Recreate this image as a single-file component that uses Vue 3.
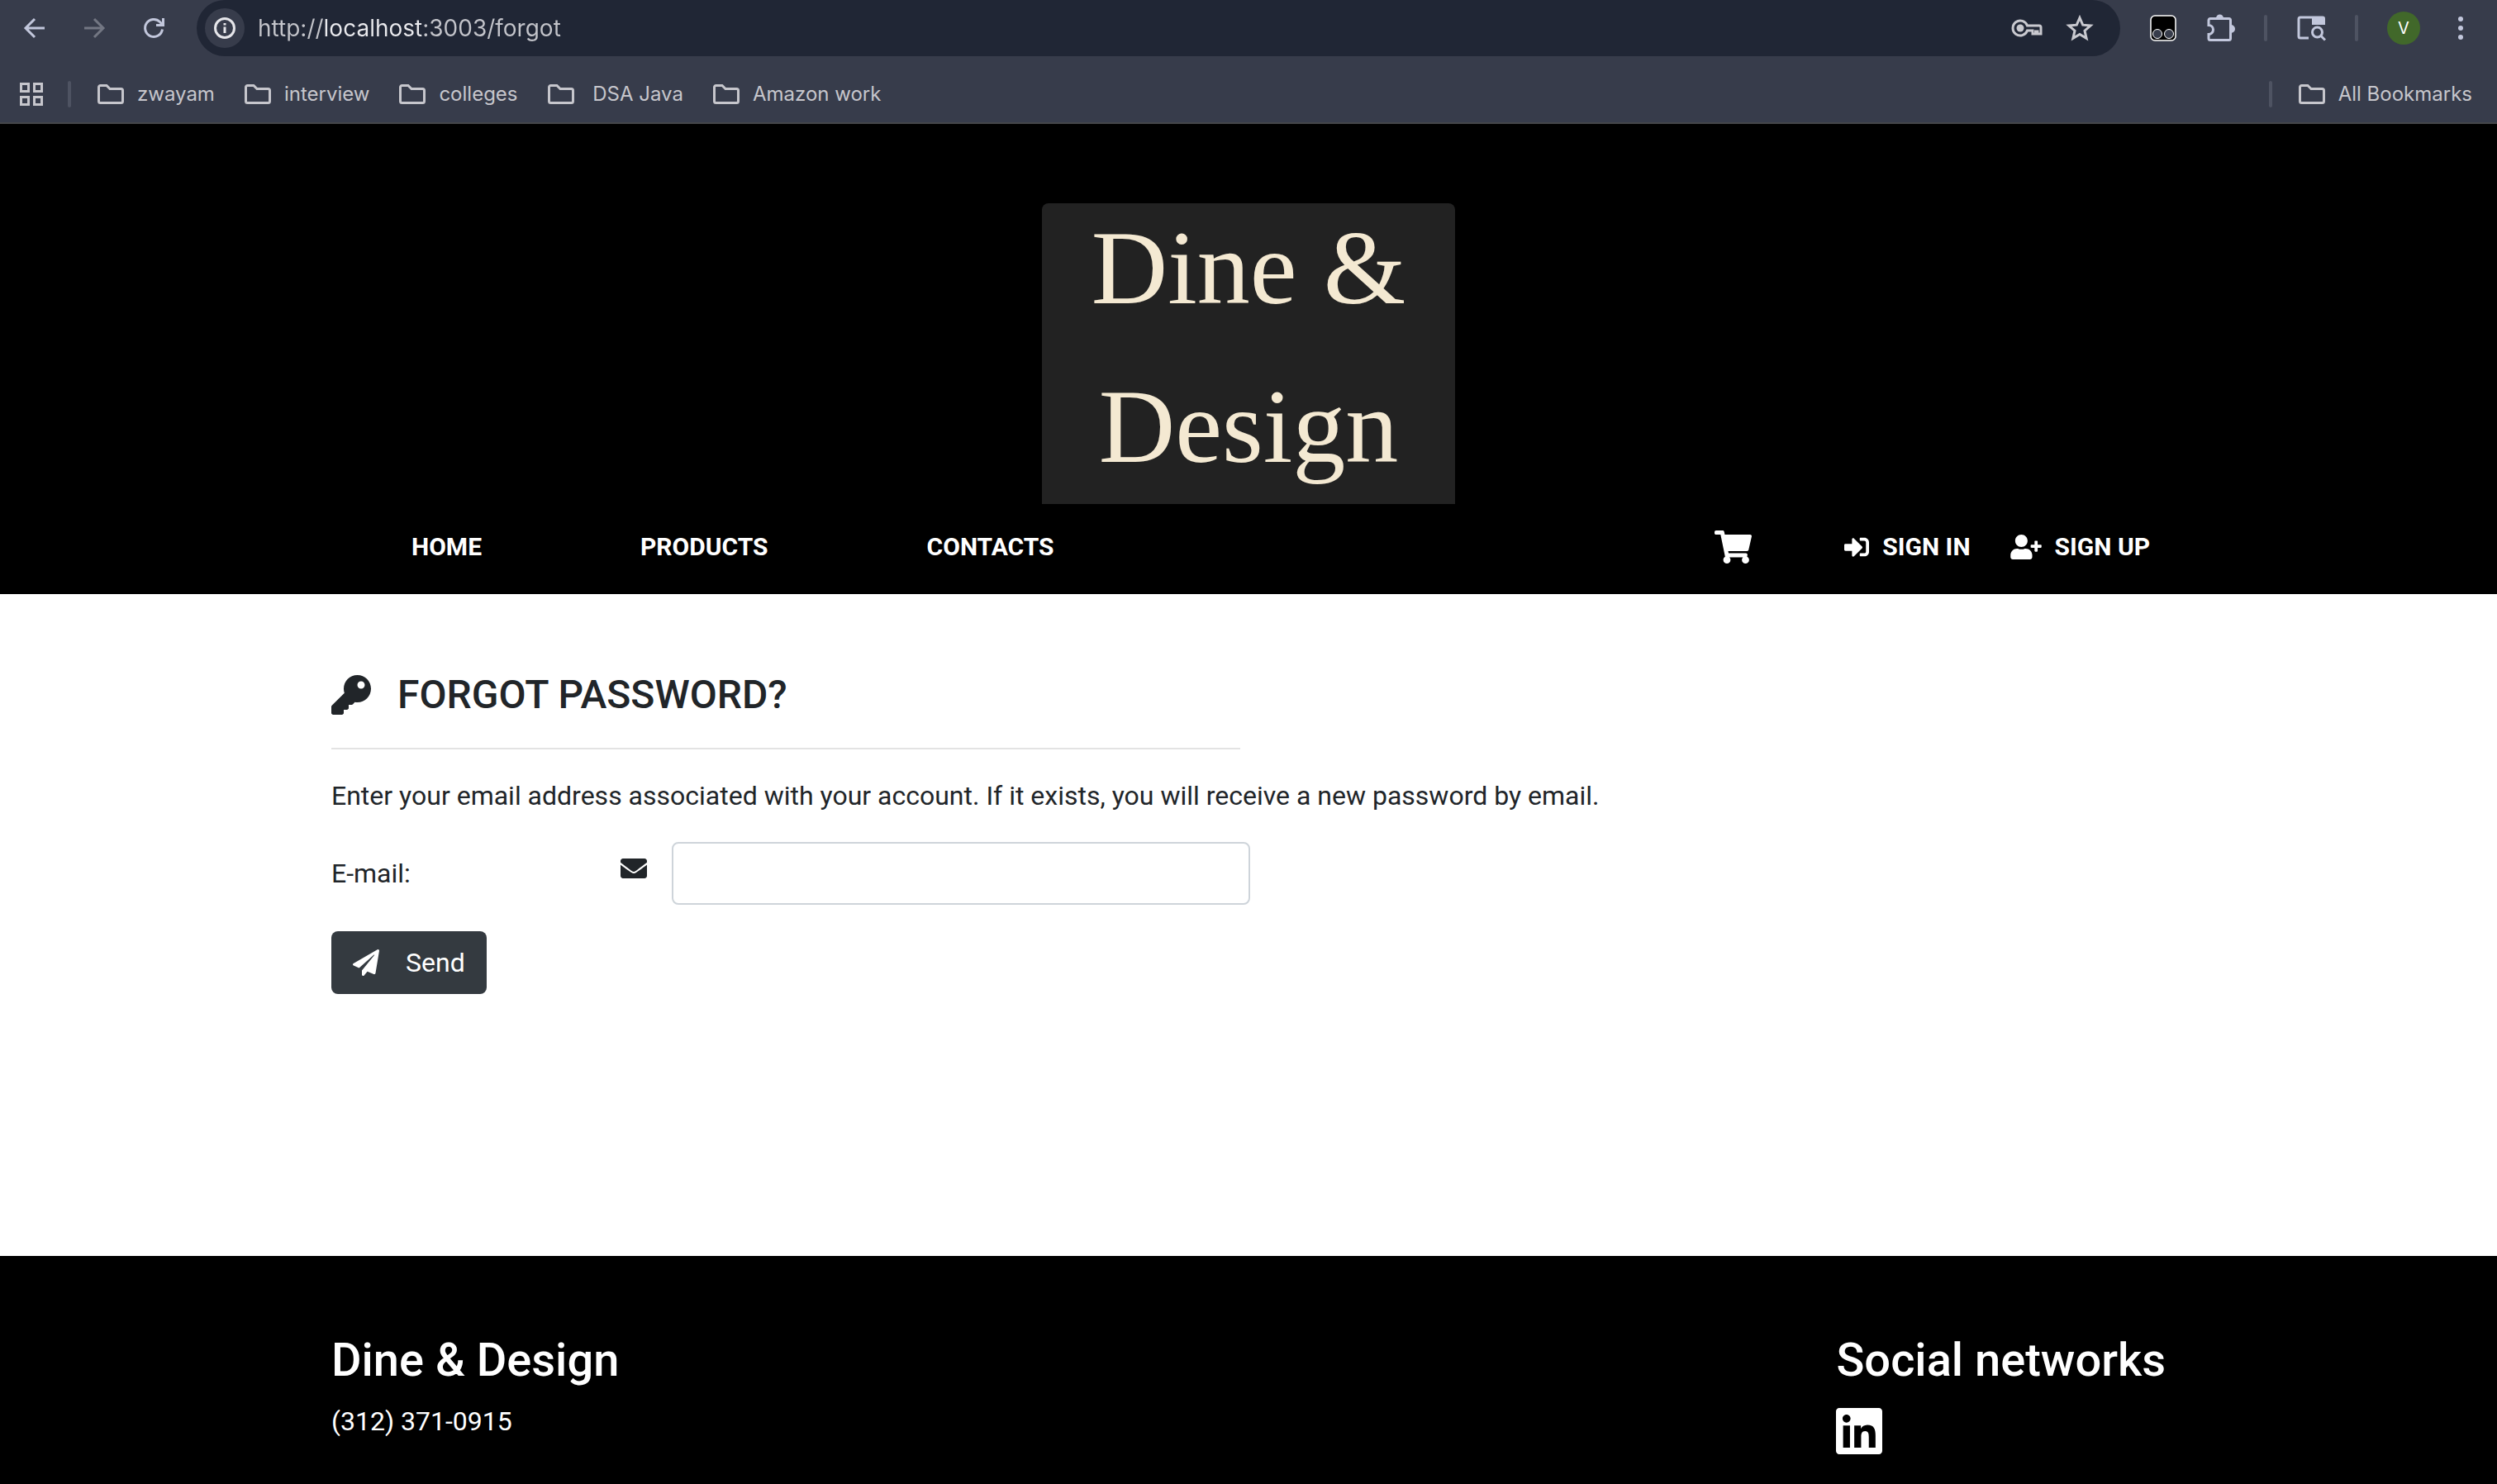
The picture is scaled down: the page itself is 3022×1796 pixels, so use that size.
<script setup>
import { ref } from 'vue'

const address = ref('http://localhost:3003/forgot')
const email = ref('')
const folders = ['zwayam', 'interview', 'colleges', '\u00a0DSA Java', 'Amazon work']
const links = ['HOME', 'PRODUCTS', 'CONTACTS']
</script>

<template>
  <div class="window">
    <div class="browser">
      <div class="toolbar">
        <button class="tool" aria-label="Back">
          <svg width="28" height="28" viewBox="0 0 28 28"><path d="M26 14H3.500M14 3L3 14l11 11" /></svg>
        </button>
        <button class="tool dim" aria-label="Forward">
          <svg width="28" height="28" viewBox="0 0 28 28"><path d="M2 14h22.500M14 3l11 11-11 11" /></svg>
        </button>
        <button class="tool" aria-label="Reload">
          <svg width="28" height="28" viewBox="0 0 28 28"><path d="M24.500 15.500A10.500 10.500 0 1 1 21.500 6.500L25 10M25.500 2v8.500H17" /></svg>
        </button>
        <div class="omnibox">
          <button class="site-info" aria-label="View site information">
            <svg width="28" height="28" viewBox="0 0 28 28"><circle cx="14" cy="14" r="11.500" /><path d="M14 12.500V20M14 8v2.500" /></svg>
          </button>
          <input v-model="address" class="address" type="text" aria-label="Address" spellcheck="false" />
          <button class="in-box" aria-label="Passwords">
            <svg width="38" height="24" viewBox="0 0 38 24"><path d="M19.500 9A9 9 0 1 0 19.500 15H26v4h3.500v-3H32v3h4V11a2 2 0 0 0-2-2z" /><circle class="solid" cx="11" cy="12" r="4.500" /></svg>
          </button>
          <button class="in-box" aria-label="Bookmark this page">
            <svg width="34" height="34" viewBox="0 0 34 34"><path d="M17 4.500l3.700 8.700 9.400.8-7.100 6.200 2.100 9.200-8.100-4.900-8.100 4.900 2.100-9.200-7.100-6.200 9.400-.8z" /></svg>
          </button>
        </div>
        <div class="extensions">
          <button class="ext" aria-label="Extension">
            <svg width="32" height="32" viewBox="0 0 32 32"><rect x="1" y="1" width="30" height="30" rx="5" fill="#000" stroke="#fff" stroke-width="1.500" /><circle cx="9" cy="23" r="5.500" fill="#373c4b" stroke="#fff" stroke-width="1" /><circle cx="23" cy="23" r="5.500" fill="#373c4b" stroke="#fff" stroke-width="1" /></svg>
          </button>
          <button class="ext" aria-label="Extensions">
            <svg width="36" height="36" viewBox="0 0 36 36"><path d="M6 6.500H28.500a2 2 0 0 1 2 2V30.500a2 2 0 0 1-2 2H6a2 2 0 0 1-2-2V25.500a5.500 5.500 0 0 0 0-11V8.500a2 2 0 0 1 2-2z" /><path class="solid" d="M13 6a4.500 4.500 0 0 1 9 0zM31 14a5 5 0 0 1 0 10z" /></svg>
          </button>
          <span class="rule"></span>
          <button class="ext" aria-label="Search tabs">
            <svg width="36" height="34" viewBox="0 0 36 34"><path d="M15 29H5a2 2 0 0 1-2-2V6a2 2 0 0 1 2-2h14" /><circle cx="25.500" cy="22" r="6" /><path d="M30 26.500l5 5" /><path class="solid" d="M19 2.500H32a3 3 0 0 1 3 3V13H19z" /></svg>
          </button>
          <span class="rule"></span>
          <button class="avatar" aria-label="Profile">V</button>
          <button class="ext" aria-label="Menu">
            <svg width="8" height="32" viewBox="0 0 8 32"><g class="solid"><circle cx="4" cy="5" r="3" /><circle cx="4" cy="16" r="3" /><circle cx="4" cy="27" r="3" /></g></svg>
          </button>
        </div>
      </div>
      <div class="bookmarks">
        <button class="tool" aria-label="Apps">
          <svg width="28" height="28" viewBox="0 0 28 28"><path d="M1.500 1.500h9v9h-9zM17.500 1.500h9v9h-9zM1.500 17.500h9v9h-9zM17.500 17.500h9v9h-9z" /></svg>
        </button>
        <span class="rule"></span>
        <div class="folders">
          <button v-for="name in folders" :key="name" class="folder">
            <svg width="32" height="24" viewBox="0 0 32 24"><path d="M3.500 1.500H11L15 5.500H28.500a2 2 0 0 1 2 2V20.500a2 2 0 0 1-2 2H3.500a2 2 0 0 1-2-2V3.500a2 2 0 0 1 2-2z" /></svg>{{ name }}
          </button>
        </div>
        <span class="rule"></span>
        <button class="folder">
          <svg width="32" height="24" viewBox="0 0 32 24"><path d="M3.500 1.500H11L15 5.500H28.500a2 2 0 0 1 2 2V20.500a2 2 0 0 1-2 2H3.500a2 2 0 0 1-2-2V3.500a2 2 0 0 1 2-2z" /></svg>All Bookmarks
        </button>
      </div>
    </div>

    <header class="masthead">
      <a class="logo" href="#home"><span>Dine &amp;</span><span>Design</span></a>
      <nav class="container nav">
        <div class="links">
          <a v-for="link in links" :key="link" :href="'#' + link.toLowerCase()">{{ link }}</a>
        </div>
        <div class="account">
          <a class="cart" href="#cart" aria-label="Cart">
            <svg width="45" height="40" viewBox="0 0 576 512"><path d="M528.12 301.319l47.273-208C578.806 78.301 567.391 64 551.99 64H159.208l-9.166-44.81C147.758 8.021 137.93 0 126.529 0H24C10.745 0 0 10.745 0 24v16c0 13.255 10.745 24 24 24h69.883l70.248 343.435C147.325 417.1 136 435.222 136 456c0 30.928 25.072 56 56 56s56-25.072 56-56c0-15.674-6.447-29.835-16.824-40h209.647C430.447 426.165 424 440.326 424 456c0 30.928 25.072 56 56 56s56-25.072 56-56c0-22.172-12.888-41.332-31.579-50.405l5.517-24.276c3.413-15.018-8.002-29.319-23.403-29.319H218.117l-6.545-32h293.145c11.206 0 20.92-7.754 23.403-18.681z" /></svg>
          </a>
          <a href="#sign-in">
            <svg width="30" height="30" viewBox="0 0 512 512"><path d="M416 448h-84c-6.6 0-12-5.400-12-12v-40c0-6.600 5.400-12 12-12h84c17.700 0 32-14.300 32-32V160c0-17.700-14.300-32-32-32h-84c-6.600 0-12-5.400-12-12V76c0-6.600 5.400-12 12-12h84c53 0 96 43 96 96v192c0 53-43 96-96 96zm-47-201L201 79c-15-15-41-4.500-41 17v96H24c-13.300 0-24 10.700-24 24v96c0 13.300 10.700 24 24 24h136v96c0 21.500 26 32 41 17l168-168c9.300-9.400 9.300-24.600 0-34z" /></svg>SIGN IN
          </a>
          <a href="#sign-up">
            <svg width="38" height="30" viewBox="0 0 640 512"><path d="M624 208h-64v-64c0-8.800-7.200-16-16-16h-32c-8.800 0-16 7.200-16 16v64h-64c-8.800 0-16 7.200-16 16v32c0 8.800 7.200 16 16 16h64v64c0 8.800 7.200 16 16 16h32c8.800 0 16-7.200 16-16v-64h64c8.800 0 16-7.200 16-16v-32c0-8.800-7.200-16-16-16zm-400 48c70.700 0 128-57.300 128-128S294.700 0 224 0 96 57.300 96 128s57.300 128 128 128zm89.600 32h-16.700c-22.200 10.200-46.900 16-72.900 16s-50.600-5.800-72.900-16h-16.700C60.200 288 0 348.200 0 422.400V464c0 26.500 21.500 48 48 48h352c26.500 0 48-21.500 48-48v-41.600c0-74.200-60.200-134.400-134.400-134.400z" /></svg>SIGN UP
          </a>
        </div>
      </nav>
    </header>

    <main class="content">
      <div class="container">
        <h4>
          <svg width="48" height="48" viewBox="0 0 512 512"><path d="M512 176.001C512 273.203 433.202 352 336 352c-11.220 0-22.190-1.062-32.827-3.069l-24.012 27.014A23.999 23.999 0 0 1 261.223 384H224v40c0 13.255-10.745 24-24 24h-40v40c0 13.255-10.745 24-24 24H24c-13.255 0-24-10.745-24-24v-78.059c0-6.365 2.529-12.470 7.029-16.971l161.802-161.802C163.108 213.814 160 195.271 160 176 160 78.798 238.797.001 335.999 0 433.488-.001 512 78.511 512 176.001zM336 128c0 26.510 21.490 48 48 48s48-21.490 48-48-21.490-48-48-48-48 21.490-48 48z" /></svg>FORGOT PASSWORD?
        </h4>
        <hr />
        <p>Enter your email address associated with your account. If it exists, you will receive a new password by email.</p>
        <form @submit.prevent>
          <div class="field">
            <label for="email">E-mail:</label>
            <svg width="32" height="32" viewBox="0 0 512 512"><path d="M502.300 190.800c3.900-3.100 9.700-.2 9.700 4.700V400c0 26.500-21.500 48-48 48H48c-26.500 0-48-21.500-48-48V195.600c0-5 5.700-7.800 9.700-4.700 22.400 17.400 52.100 39.500 154.100 113.600 21.100 15.400 56.700 47.800 92.200 47.600 35.700.3 72-32.800 92.300-47.600 102-74.100 131.600-96.300 154-113.700zM256 320c23.200.4 56.600-29.200 73.400-41.400 132.700-96.300 142.800-104.700 173.400-128.700 5.800-4.500 9.200-11.500 9.200-18.900v-19c0-26.500-21.500-48-48-48H48c-26.500 0-48 21.500-48 48v19c0 7.400 3.400 14.300 9.200 18.900 30.600 23.900 40.700 32.400 173.400 128.700 16.800 12.200 50.200 41.800 73.400 41.400z" /></svg>
            <input id="email" v-model="email" type="email" />
          </div>
          <button class="send" type="submit">
            <svg width="32" height="32" viewBox="0 0 512 512"><path d="M476 3.200L12.500 270.600c-18.100 10.400-15.800 35.600 2.200 43.200L121 358.400l287.300-253.200c5.500-4.900 13.300 2.600 8.600 8.300L176 407v80.500c0 23.600 28.500 32.900 42.500 15.800L282 426l124.600 52.200c14.200 6 30.400-2.900 33-18.200l72-432C515 7.800 493.300-6.800 476 3.200z" /></svg>Send
          </button>
        </form>
      </div>
    </main>

    <footer class="footer">
      <div class="container columns">
        <div>
          <h3>Dine &amp; Design</h3>
          <p>(312) 371-0915</p>
        </div>
        <div>
          <h3>Social networks</h3>
          <a class="social" href="#linkedin" aria-label="LinkedIn">
            <svg width="56" height="56" viewBox="0 32 448 448"><path d="M416 32H31.900C14.300 32 0 46.500 0 64.300v383.400C0 465.500 14.300 480 31.900 480H416c17.600 0 32-14.500 32-32.300V64.300c0-17.800-14.400-32.300-32-32.300zM135.400 416H69V202.200h66.500V416zm-33.200-243c-21.300 0-38.500-17.300-38.500-38.500S80.900 96 102.200 96c21.200 0 38.500 17.300 38.500 38.500 0 21.300-17.200 38.500-38.500 38.500zm282.100 243h-66.400V312c0-24.800-.5-56.700-34.500-56.700-34.600 0-39.900 27-39.900 54.900V416h-66.400V202.200h63.700v29.200h.9c8.900-16.800 30.600-34.500 62.200-34.500 66.500 0 78.800 43.800 78.800 100.900V416z" /></svg>
          </a>
        </div>
      </div>
    </footer>
  </div>
</template>

<style>
body {
  margin: 0;
}
</style>

<style scoped>
.window {
  display: flex;
  flex-direction: column;
  min-height: 100vh;
  overflow: hidden;
  background: #fff;
  color: #212529;
  font: 400 32px/48px Roboto, sans-serif;
}
svg {
  display: block;
  flex: none;
  fill: currentColor;
}
button {
  padding: 0;
  border: 0;
  background: none;
  color: inherit;
  font: inherit;
}
a {
  color: inherit;
  text-decoration: none;
}
h3,
h4,
p {
  margin: 0;
  font-weight: 400;
}

/* Browser frame */
.browser {
  border-bottom: 2px solid #444649;
  background: #373c4b;
  color: #c6c6cc;
  font: 400 24px/32px Inter, sans-serif;
}
.browser svg {
  fill: none;
  stroke: currentColor;
  stroke-width: 3;
}
.browser svg .solid {
  fill: currentColor;
  stroke: none;
}
.toolbar {
  display: flex;
  align-items: center;
  height: 68px;
  padding-left: 28px;
  color: #c2c7dc;
}
.toolbar > .tool {
  margin-right: 44px;
}
.toolbar > .tool:nth-child(3) {
  margin-right: 38px;
}
.toolbar > .dim {
  color: #737783;
}
.omnibox {
  display: flex;
  flex: 1;
  align-items: center;
  height: 68px;
  box-sizing: border-box;
  padding: 0 32px 0 10px;
  border-radius: 34px;
  background: #202635;
  color: #c9c9cf;
}
.site-info {
  display: grid;
  place-items: center;
  width: 48px;
  height: 48px;
  border-radius: 50%;
  background: #373c4b;
  color: #e6e6ea;
}
.address {
  flex: 1;
  min-width: 0;
  height: 40px;
  margin-left: 16px;
  padding: 0;
  border: 0;
  outline: 0;
  background: linear-gradient(to right, #c3c4ca 80px, #eaeaee 80px 198px, #c3c4ca 198px);
  background-clip: text;
  -webkit-background-clip: text;
  color: transparent;
  font: 400 28px/40px Inter, sans-serif;
}
.in-box {
  margin-left: 28px;
}
.extensions {
  display: flex;
  align-items: center;
  gap: 35px;
  padding: 0 40px 0 36px;
}
.rule {
  width: 4px;
  height: 32px;
  border-radius: 2px;
  background: #4e5362;
}
.avatar {
  width: 40px;
  height: 40px;
  margin-right: 10px;
  border-radius: 50%;
  background: #41682a;
  color: #fff;
  font-size: 20px;
}
.bookmarks {
  display: flex;
  box-sizing: border-box;
  align-items: center;
  height: 80px;
  padding: 12px 30px 0 24px;
}
.bookmarks .rule {
  margin: 0 32px 0 30px;
}
.folders {
  display: flex;
  flex: 1;
  gap: 36px;
}
.folder {
  display: flex;
  align-items: center;
  gap: 16px;
}

/* Shop header */
.container {
  box-sizing: border-box;
  width: 100%;
  max-width: 2220px;
  margin: 0 auto;
}
.masthead {
  padding: 96px 0 29px;
  background: #000;
  color: #fff;
}
.logo {
  display: flex;
  box-sizing: border-box;
  flex-direction: column;
  align-items: center;
  justify-content: center;
  width: 500px;
  height: 364px;
  margin: 0 auto;
  padding-bottom: 16px;
  border-radius: 8px 8px 0 0;
  background: #222;
  color: #f4e9d2;
  font: 400 128px/192px "Liberation Serif", serif;
}
.nav {
  display: flex;
  align-items: center;
  justify-content: space-between;
  height: 80px;
  padding-top: 24px;
  font-size: 30px;
  font-weight: 700;
}
.nav .links {
  display: flex;
  gap: 192px;
  padding-left: 97px;
}
.nav .account {
  display: flex;
  align-items: center;
  gap: 48px;
  padding-right: 19px;
}
.nav .account a {
  display: flex;
  align-items: center;
  gap: 16px;
}
.nav .cart {
  margin-right: 64px;
}

/* Password form */
.content {
  flex: 1;
  padding: 92px 0 0;
}
h4 {
  display: flex;
  align-items: center;
  gap: 32px;
  font-size: 48px;
  font-weight: 500;
  line-height: 60px;
}
hr {
  width: 1100px;
  max-width: 100%;
  height: 2px;
  margin: 34px 0 32px;
  border: 0;
  background: #e3e3e3;
}
.field {
  display: flex;
  align-items: center;
  margin: 32px 0;
}
.field label {
  width: 350px;
}
.field svg {
  margin-right: 30px;
  margin-bottom: 12px;
}
.field input {
  box-sizing: border-box;
  width: 700px;
  height: 76px;
  padding: 12px 24px;
  border: 2px solid #ced4da;
  border-radius: 8px;
  background: #fff;
  color: #495057;
  font: inherit;
}
.send {
  display: flex;
  align-items: center;
  gap: 32px;
  height: 76px;
  padding: 0 26px;
  border-radius: 8px;
  background: #343a40;
  color: #fff;
}

/* Footer */
.footer {
  padding: 92px 0 36px;
  background: #000;
  color: #fff;
}
.columns {
  display: flex;
  justify-content: space-between;
}
h3 {
  margin-bottom: 16px;
  font-size: 56px;
  font-weight: 500;
  line-height: 68px;
}
.social {
  display: block;
  padding-top: 8px;
}
</style>
